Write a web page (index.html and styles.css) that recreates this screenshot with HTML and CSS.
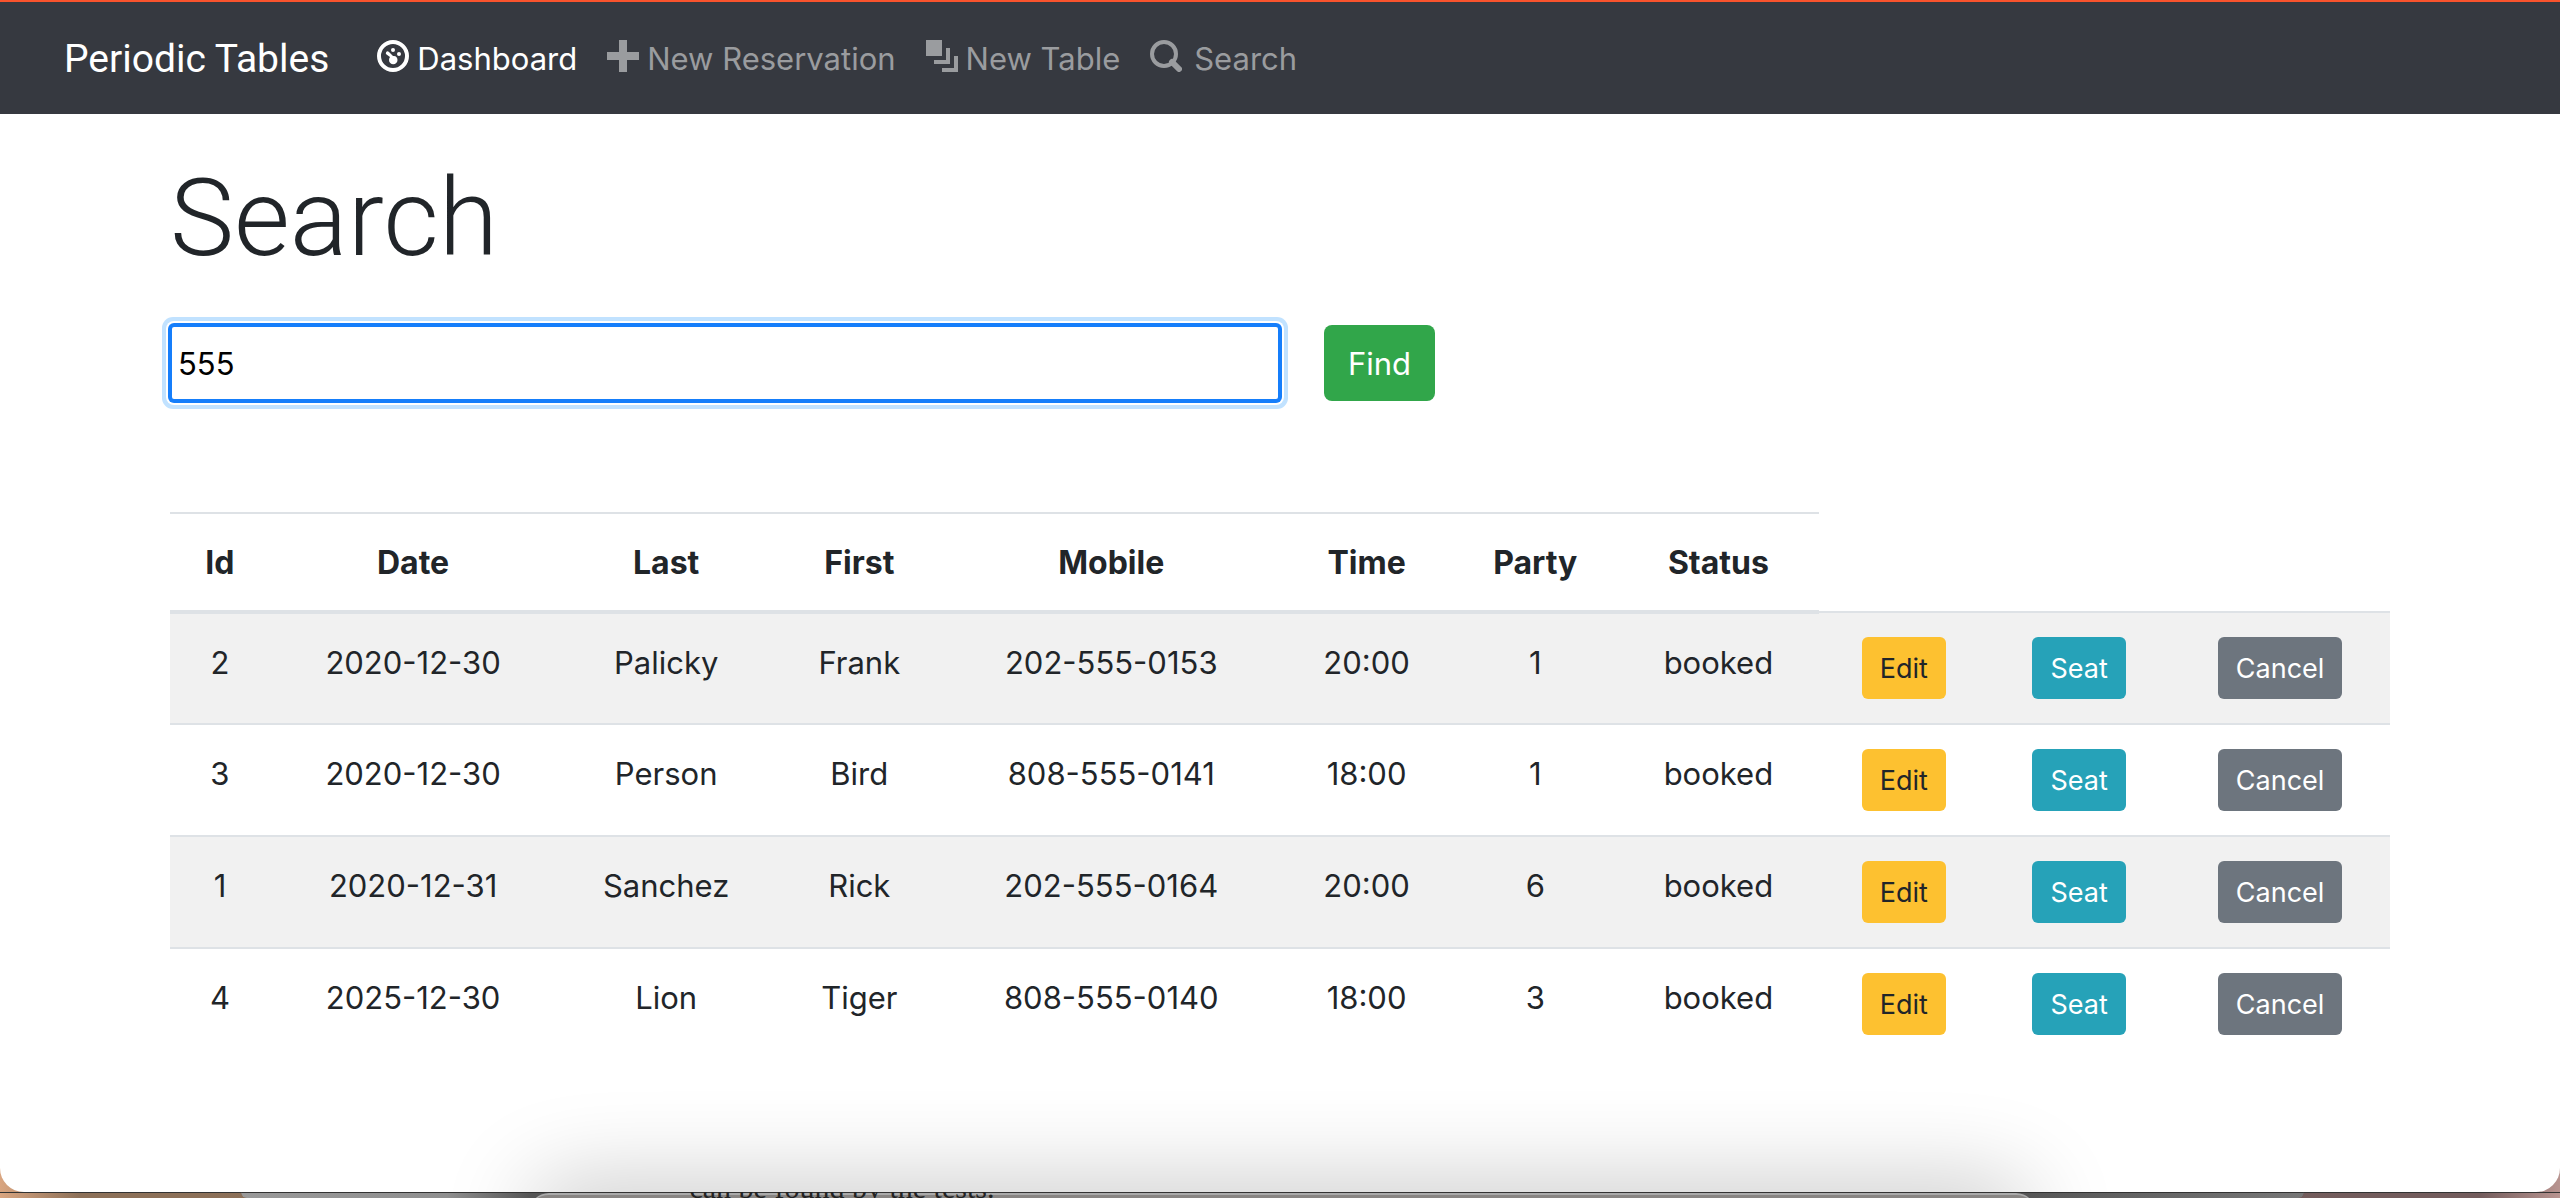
FILE: index.html
```html
<!DOCTYPE html>
<html lang="en">
<head>
<meta charset="utf-8">
<title>Periodic Tables</title>
<link rel="stylesheet" href="styles.css">
</head>
<body>
<div class="window">
  <nav class="navbar">
    <a class="brand" href="#">Periodic Tables</a>
    <a class="nav-link active" href="#"><svg class="icon" viewBox="0 0 32 32" aria-hidden="true"><circle cx="16" cy="16" r="14" fill="none" stroke="currentColor" stroke-width="4"/><circle cx="16" cy="10" r="2"/><circle cx="22" cy="14" r="2"/><path d="M9 12.500a2 2 0 0 1 3-.5l4 4c3-.5 4.500 1.500 4.500 4a4 4 0 0 1-8.500 0c0-1 .3-2 1-3l-3.500-2.500a1.500 1.500 0 0 1-.5-2z"/></svg>Dashboard</a>
    <a class="nav-link" href="#"><svg class="icon" viewBox="0 0 32 32" aria-hidden="true"><path d="M12 0h8v12h12v8H20v12h-8V20H0v-8h12z"/></svg>New Reservation</a>
    <a class="nav-link" href="#"><svg class="icon" viewBox="0 0 32 32" aria-hidden="true"><path d="M0 0h16v16H0zM20 8h4v16H8v-4h12zM28 16h4v16H16v-4h12z"/></svg>New Table</a>
    <a class="nav-link wide" href="#"><svg class="icon" viewBox="0 0 32 32" aria-hidden="true"><circle cx="14" cy="14" r="12" fill="none" stroke="currentColor" stroke-width="4"/><path d="M22 22l7 7" stroke="currentColor" stroke-width="6" stroke-linecap="round"/></svg>Search</a>
  </nav>
  <main class="container">
    <h1 class="title">Search</h1>
    <form class="search">
      <input class="query" type="text" aria-label="Mobile number" value="555">
      <button class="btn find" type="button">Find</button>
    </form>
    <table class="results">
      <colgroup><col class="c-id"><col class="c-date"><col class="c-last"><col class="c-first"><col class="c-mobile"><col class="c-time"><col class="c-party"><col class="c-status"><col class="c-edit"><col class="c-seat"><col class="c-cancel"></colgroup>
      <thead><tr><th>Id</th><th>Date</th><th>Last</th><th>First</th><th>Mobile</th><th>Time</th><th>Party</th><th>Status</th></tr></thead>
      <tbody>
        <tr><td>2</td><td>2020-12-30</td><td>Palicky</td><td>Frank</td><td>202-555-0153</td><td>20:00</td><td>1</td><td>booked</td><td class="action"><button class="btn small edit">Edit</button></td><td class="action"><button class="btn small seat">Seat</button></td><td class="action"><button class="btn small cancel">Cancel</button></td></tr>
        <tr><td>3</td><td>2020-12-30</td><td>Person</td><td>Bird</td><td>808-555-0141</td><td>18:00</td><td>1</td><td>booked</td><td class="action"><button class="btn small edit">Edit</button></td><td class="action"><button class="btn small seat">Seat</button></td><td class="action"><button class="btn small cancel">Cancel</button></td></tr>
        <tr><td>1</td><td>2020-12-31</td><td>Sanchez</td><td>Rick</td><td>202-555-0164</td><td>20:00</td><td>6</td><td>booked</td><td class="action"><button class="btn small edit">Edit</button></td><td class="action"><button class="btn small seat">Seat</button></td><td class="action"><button class="btn small cancel">Cancel</button></td></tr>
        <tr><td>4</td><td>2025-12-30</td><td>Lion</td><td>Tiger</td><td>808-555-0140</td><td>18:00</td><td>3</td><td>booked</td><td class="action"><button class="btn small edit">Edit</button></td><td class="action"><button class="btn small seat">Seat</button></td><td class="action"><button class="btn small cancel">Cancel</button></td></tr>
      </tbody>
    </table>
  </main>
  <div class="shade"></div>
</div>
<div class="desktop"><div class="back-window"><div class="front-window"><p class="note">can be found by the tests.</p></div></div></div>
</body>
</html>
```
FILE: styles.css
```css
* { box-sizing: border-box; }

body {
  margin: 0;
  min-height: 100vh;
  display: flex;
  flex-direction: column;
  background: linear-gradient(90deg, #d9a580, #8c7058 80px, #8c7058 200px, #735c5c 2350px, #735c5c 2480px, #b89490);
  color: #212529;
  font: 31px/48px Inter, "Liberation Sans", sans-serif;
}

.window {
  position: relative;
  flex: 1;
  overflow: hidden;
  background: #fff;
  border-top: 2px solid #f9532d;
  border-radius: 0 0 24px 24px;
}

.navbar {
  display: flex;
  align-items: center;
  height: 112px;
  padding: 2px 64px 0;
  background: #363940;
}

.brand {
  margin-right: 33px;
  color: #fff;
  font: 39px/60px Roboto, "Liberation Sans", sans-serif;
  text-decoration: none;
}

.nav-link {
  display: flex;
  align-items: center;
  gap: 8px;
  padding: 0 15px;
  color: #9a9c9f;
  text-decoration: none;
}

.nav-link.active { color: #fff; }
.nav-link.wide { gap: 12px; }

.icon {
  width: 32px;
  height: 32px;
  margin-bottom: 6px;
  fill: currentColor;
}

.container {
  max-width: 2280px;
  margin: 0 auto;
  padding: 37px 30px 0;
}

.title {
  margin: 0;
  font: 300 108px/134px Roboto, "Liberation Sans", sans-serif;
}

.search {
  display: flex;
  gap: 44px;
  margin: 40px 0 111px;
}

.query {
  width: 50%;
  height: 76px;
  padding: 0 6px;
  border: 2px solid #157efb;
  border-radius: 4px;
  outline: none;
  background: #fff;
  box-shadow: 0 0 0 2px #157efb, 0 0 0 4px #fff, 0 0 0 8px #c1e2ff;
  color: #000;
  font: inherit;
}

.btn {
  border: 0;
  border-radius: 8px;
  color: #fff;
  font: inherit;
}

.find {
  height: 76px;
  padding: 2px 24px 0;
  background: #31a64a;
}

.results {
  width: 100%;
  table-layout: fixed;
  border-collapse: collapse;
  text-align: center;
}

.c-id { width: 4.5%; }
.c-date { width: 12.9%; }
.c-last { width: 9.9%; }
.c-first { width: 7.5%; }
.c-mobile { width: 15.2%; }
.c-time { width: 7.8%; }
.c-party { width: 7.4%; }
.c-status { width: 9.1%; }
.c-edit { width: 7.6%; }
.c-seat { width: 8.2%; }
.c-cancel { width: 9.9%; }

.results th,
.results td {
  padding: 25px 0 23px;
  border-top: 2px solid #dee2e6;
  vertical-align: top;
}

.results th {
  border-bottom: 4px solid #dee2e6;
  font-size: 32px;
  font-weight: 700;
}

.results .action { padding: 24px 0; }

.results tbody tr:nth-child(odd) { background: #f1f1f1; }

.small {
  display: block;
  height: 62px;
  margin: 0 auto;
  padding: 2px 18px 0;
  border-radius: 6px;
  font-size: 27px;
}

.edit { background: #fdc130; color: #212529; }
.seat { background: #26a2b8; }
.cancel { background: #6d757e; }

/* shadow cast by the window docked below */
.shade {
  position: absolute;
  left: 21%;
  right: 21%;
  bottom: -60px;
  height: 60px;
  border-radius: 30px;
  box-shadow: 0 0 90px 10px rgba(0, 0, 0, .22);
}

.desktop {
  height: 6px;
  overflow: hidden;
  padding: 0 10% 0 9.4%;
  box-shadow: inset 0 1px #333;
}

.back-window {
  height: 100%;
  padding: 1px 13% 0 14%;
  border-radius: 0 0 6px 6px;
  background: linear-gradient(90deg, #999, #8f8f8f 10%, #555 14%, #555 86%, #777);
  box-shadow: inset 0 1px #333;
}

.front-window {
  height: 20px;
  padding-left: 160px;
  border-top: 2px solid #aaa;
  border-radius: 20px 20px 0 0;
  background: #888583;
}

.note {
  margin: -22px 0 0;
  color: #222;
  font: 30px/30px "Liberation Serif", serif;
}
```
